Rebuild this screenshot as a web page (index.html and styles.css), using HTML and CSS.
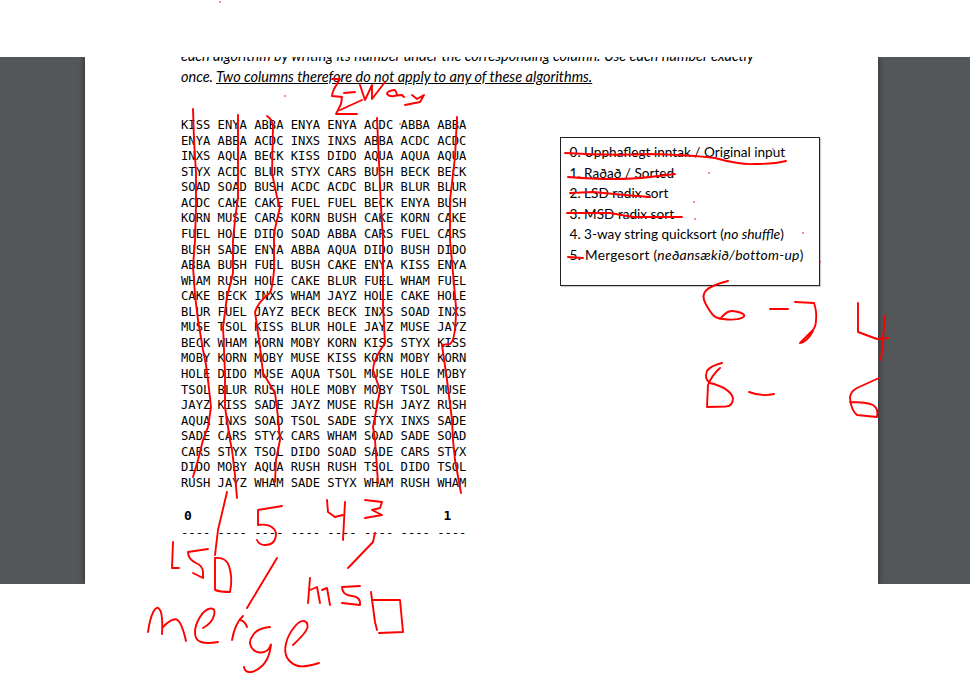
FILE: index.html
```html
<!DOCTYPE html>
<html lang="en">
<head>
<meta charset="utf-8">
<title>Sorting algorithms exam</title>
<link rel="stylesheet" href="styles.css">
</head>
<body>
<main class="viewer">
  <article class="page">
    <p class="intro">each algorithm by writing its number under the corresponding column. Use each number exactly<br>once. <u>Two columns therefore do not apply to any of these algorithms.</u></p>
    <div class="exercise">
      <div class="trace">
<pre class="rows">KISS ENYA ABBA ENYA ENYA ACDC ABBA ABBA
ENYA ABBA ACDC INXS INXS ABBA ACDC ACDC
INXS AQUA BECK KISS DIDO AQUA AQUA AQUA
STYX ACDC BLUR STYX CARS BUSH BECK BECK
SOAD SOAD BUSH ACDC ACDC BLUR BLUR BLUR
ACDC CAKE CAKE FUEL FUEL BECK ENYA BUSH
KORN MUSE CARS KORN BUSH CAKE KORN CAKE
FUEL HOLE DIDO SOAD ABBA CARS FUEL CARS
BUSH SADE ENYA ABBA AQUA DIDO BUSH DIDO
ABBA BUSH FUEL BUSH CAKE ENYA KISS ENYA
WHAM RUSH HOLE CAKE BLUR FUEL WHAM FUEL
CAKE BECK INXS WHAM JAYZ HOLE CAKE HOLE
BLUR FUEL JAYZ BECK BECK INXS SOAD INXS
MUSE TSOL KISS BLUR HOLE JAYZ MUSE JAYZ
BECK WHAM KORN MOBY KORN KISS STYX KISS
MOBY KORN MOBY MUSE KISS KORN MOBY KORN
HOLE DIDO MUSE AQUA TSOL MUSE HOLE MOBY
TSOL BLUR RUSH HOLE MOBY MOBY TSOL MUSE
JAYZ KISS SADE JAYZ MUSE RUSH JAYZ RUSH
AQUA INXS SOAD TSOL SADE STYX INXS SADE
SADE CARS STYX CARS WHAM SOAD SADE SOAD
CARS STYX TSOL DIDO SOAD SADE CARS STYX
DIDO MOBY AQUA RUSH RUSH TSOL DIDO TSOL
RUSH JAYZ WHAM SADE STYX WHAM RUSH WHAM</pre>
        <div class="answers">
          <b class="answer">0</b><b></b><b></b><b></b><b></b><b></b><b></b><b class="answer answer-last">1</b>
        </div>
        <pre class="rules">---- ---- ---- ---- ---- ---- ---- ----</pre>
      </div>
      <ul class="legend">
        <li>0. Upphaflegt inntak / Original input</li>
        <li>1. Raðað / Sorted</li>
        <li>2. LSD radix sort</li>
        <li>3. MSD radix sort</li>
        <li>4. 3-way string quicksort (<i>no shuffle</i>)</li>
        <li class="legend-wide">5. Mergesort (<i>neðansækið/bottom-up</i>)</li>
      </ul>
    </div>
  </article>
</main>
<svg class="ink" viewBox="0 0 970 674" width="970" height="674" aria-hidden="true">
  <!-- column lines -->
  <path d="M193 109L194 140L196 173L196 205L195 240L193 267L195 295L198 320L203 350L206 365L208 380L211 407L208 427L203 440L198 460L193 477"/>
  <path d="M238 115L238 173L238 197L235 220L233 240L233 273L227 297L223 327L225 373L225 407L230 440L232 450L235 475L237 498"/>
  <path d="M267 116Q273 120 273 127L272 173L277 197L280 207L274 233L274 270Q273 285 270 293Q258 302 255 312L260 347L263 373L275 393L278 417L280 440L276 460L275 482"/>
  <path d="M377 118L378 140L381 207L383 240L383 307L385 343Q373 360 373 370L380 390L373 427L375 440L378 483"/>
  <path d="M457 117L455 157L450 200L450 240L453 273L456 307Q456 340 450 344L442 345L447 380L452 420L453 440L455 460L461 493"/>
  <!-- 3-way -->
  <path d="M332 79L340 79L334 89Q332 94 332 96L342 97L341 104L336 114L357 114"/>
  <path d="M344 93L355 92"/>
  <path d="M340 110L362 100"/>
  <path d="M360 85L365 100L372 85L372 99L385 82"/>
  <path d="M397 95Q396 90 394 90Q387 91 387 94Q390 97 394 96Q400 95 402 95L404 97"/>
  <path d="M412 95L417 99L424 95L420 102L405 105"/>
  <!-- strike-outs -->
  <path d="M565 153Q610 156 650 154Q690 155 715 158Q740 165 755 164Q775 164 786 161"/>
  <path d="M568 177Q617 181 650 177L675 174"/>
  <path d="M570 193L593 192L625 195L650 197"/>
  <path d="M567 213L610 213L633 217L682 217"/>
  <path d="M568 257L583 258"/>
  <!-- digits under columns -->
  <path d="M227 492L218 530L215 555"/>
  <path d="M282 506L258 510L258 525Q273 523 276 533Q276 545 265 545Q259 545 257 540"/>
  <path d="M327 500L328 512L335 517L343 515"/>
  <path d="M345 502L343 540"/>
  <path d="M365 500L382 502L380 508L372 510L382 515L365 518"/>
  <path d="M375 533L373 542L348 568"/>
  <!-- lsd -->
  <path d="M173 542L172 568L179 568"/>
  <path d="M208 549L188 552Q188 559 196 563Q203 566 203 572L203 578L193 573"/>
  <path d="M215 558Q226 557 229 566Q233 578 230 592Q220 592 215 590L215 558"/>
  <!-- merge -->
  <path d="M277 558L262 583L247 608"/>
  <path d="M148 632Q150 618 153.5 611.5Q157 605 160 610Q163 615 162 634"/>
  <path d="M163 627Q173 617 177.5 620Q182 623 186 641"/>
  <path d="M203 628Q212 623 214 615.5Q216 608 210.5 608.5Q205 609 200 617Q195 625 195 632.5Q195 640 201 642Q207 644 218 642"/>
  <path d="M232 640Q235 623 243 616"/>
  <path d="M240 620Q245 621 247 627"/>
  <path d="M270 627Q257 628 252.5 636Q248 642 251.5 647.5Q255 653 261.5 652.5Q268 652 270 646.5Q272 641 270 650.5Q268 660 262.5 665.5Q257 671 251 672Q245 673 244 667"/>
  <path d="M293 645Q307 632 307.5 627Q308 622 304 621Q300 620 294 627.5Q288 635 286 643.5Q284 652 287 657.5Q290 663 296.5 665.5Q303 668 319 663"/>
  <!-- msd -->
  <path d="M310 578L308 603"/>
  <path d="M310 590L317 587L320 603"/>
  <path d="M322 590L327 588L330 605"/>
  <path d="M360 586L342 587Q342 595 352 596Q361 597 360 605L342 603"/>
  <path d="M371 592L375 622L377 630"/>
  <path d="M372 600L400 600L403 632L379 633"/>
  <!-- margin sums -->
  <path d="M728 281Q712 285 706.5 290Q701 295 705.5 303.5Q710 312 713.5 315.5Q717 319 727.5 319.5Q738 320 742.5 317.5Q747 315 740 312.5Q733 310 729 311.5Q725 313 720 319"/>
  <path d="M770 309L788 309"/>
  <path d="M795 302L814 303Q817 312 816 320Q816 326 813 330L800 343Q807 342 813 331"/>
  <path d="M858 303L858 332L877 339L888 338"/>
  <path d="M885 316L881 360"/>
  <path d="M722 363Q710 366 707 371Q704 379 710 383Q730 388 733 398Q733 406 726 406.5L707 407L708 385Q712 375 720 368"/>
  <path d="M749 392Q762 397 774 394"/>
  <path d="M879 378L857 388Q850 392 850 398Q851 410 857 415L877 417Q879 409 873 405Q867 402 850 402"/>
  <!-- specks -->
  <path class="speck" d="M220 2h.1M285 96h.1M400 124h.1M709 173h.1M694 202h.1M695 219h.1M803 233h.1M820 262h.1M773 149h.1"/>
</svg>
</body>
</html>
```

FILE: styles.css
```css
html, body {
  margin: 0;
  padding: 0;
  background: #fff;
}

body {
  position: relative;
  width: 970px;
  height: 674px;
  overflow: hidden;
}

.viewer {
  margin-top: 57px;
  height: 527px;
  padding-left: 85px;
  background: #53575a;
  overflow: hidden;
}

.page {
  width: 793px;
  height: 527px;
  padding-left: 96px;
  box-sizing: border-box;
  background: #fff;
  box-shadow: 0 0 6px rgba(0, 0, 0, 0.55);
  color: #000;
  overflow: hidden;
}

.intro {
  margin: -12px 0 0;
  font: italic 14.5px/21px "Lato", sans-serif;
}

.exercise {
  display: flex;
  align-items: flex-start;
  margin-top: 31px;
}

.trace {
  width: 378.5px;
  flex: none;
  font-family: "DejaVu Sans Mono", monospace;
  font-size: 12.17px;
}

.rows,
.rules {
  margin: 0;
  font: inherit;
  line-height: 15.57px;
}

.answers {
  display: grid;
  grid-template-columns: repeat(8, 36.65px);
  margin-top: 16px;
  font-size: 13px;
  line-height: 16px;
}

.answer {
  padding-left: 3px;
}

.answer-last {
  padding-left: 6px;
}

.rules {
  margin-top: 2px;
}

.legend {
  width: 260px;
  height: 149px;
  box-sizing: border-box;
  margin: 0;
  margin-top: 19px;
  padding: 4px 9px;
  list-style: none;
  border: 1px solid #222;
  box-shadow: 1px 1px 1px rgba(0, 0, 0, 0.2);
  font: 13.6px/20.5px "Lato", sans-serif;
}

.legend i {
  font-size: 13.9px;
}

.legend-wide {
  letter-spacing: 0.3px;
}

.ink {
  position: absolute;
  left: 0;
  top: 0;
  pointer-events: none;
}

.ink path {
  fill: none;
  stroke: #f00;
  stroke-width: 1.9;
  stroke-linecap: round;
  stroke-linejoin: round;
}

.ink .speck {
  stroke-width: 1.6;
}
```
